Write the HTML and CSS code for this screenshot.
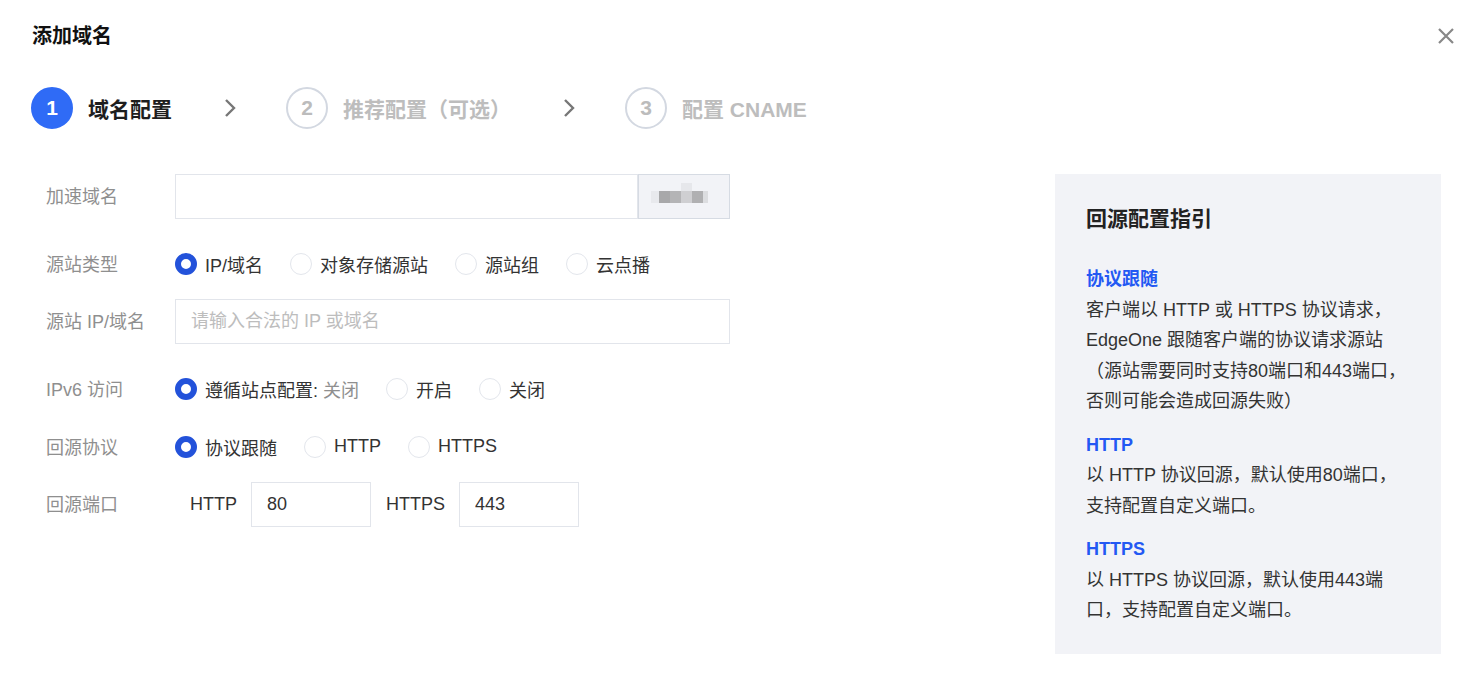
FILE: index.html
```html
<!DOCTYPE html>
<html lang="zh-CN">
<head>
    <meta charset="UTF-8">
    <title>添加域名</title>
    <link rel="stylesheet" href="styles.css">
</head>
<body>
    <div class="dialog">
        <div class="dialog-header">
            <h2 class="dialog-title">添加域名</h2>
            <button class="close-btn" aria-label="关闭">
                <svg width="18" height="18" viewBox="0 0 18 18"><path d="M2 2L16 16M16 2L2 16" stroke="#888" stroke-width="2.2" fill="none"/></svg>
            </button>
        </div>

        <div class="steps">
            <div class="step active"><span class="step-num">1</span><span class="step-text">域名配置</span></div>
            <svg class="step-arrow" width="12" height="20" viewBox="0 0 12 20"><path d="M2 2L10 10L2 18" stroke="#777" stroke-width="2.4" fill="none"/></svg>
            <div class="step"><span class="step-num">2</span><span class="step-text">推荐配置（可选）</span></div>
            <svg class="step-arrow" width="12" height="20" viewBox="0 0 12 20"><path d="M2 2L10 10L2 18" stroke="#777" stroke-width="2.4" fill="none"/></svg>
            <div class="step"><span class="step-num">3</span><span class="step-text">配置 CNAME</span></div>
        </div>

        <div class="content">
            <div class="form">
                <div class="form-row">
                    <label class="form-label label-input">加速域名</label>
                    <div class="input-group">
                        <input class="input input-domain" type="text">
                        <div class="addon">
                            <span class="blur b1"></span><span class="blur b2"></span><span class="blur b3"></span><span class="blur b4"></span><span class="blur b5"></span><span class="blur b6"></span>
                        </div>
                    </div>
                </div>
                <div class="form-row radio-row">
                    <label class="form-label">源站类型</label>
                    <div class="radios">
                        <span class="radio checked"><i></i>IP/域名</span>
                        <span class="radio"><i></i>对象存储源站</span>
                        <span class="radio"><i></i>源站组</span>
                        <span class="radio"><i></i>云点播</span>
                    </div>
                </div>
                <div class="form-row">
                    <label class="form-label label-input">源站 IP/域名</label>
                    <input class="input input-wide" type="text" placeholder="请输入合法的 IP 或域名">
                </div>
                <div class="form-row radio-row">
                    <label class="form-label">IPv6 访问</label>
                    <div class="radios">
                        <span class="radio checked"><i></i>遵循站点配置: <em>关闭</em></span>
                        <span class="radio"><i></i>开启</span>
                        <span class="radio"><i></i>关闭</span>
                    </div>
                </div>
                <div class="form-row radio-row">
                    <label class="form-label">回源协议</label>
                    <div class="radios">
                        <span class="radio checked"><i></i>协议跟随</span>
                        <span class="radio"><i></i>HTTP</span>
                        <span class="radio"><i></i>HTTPS</span>
                    </div>
                </div>
                <div class="form-row">
                    <label class="form-label label-input">回源端口</label>
                    <span class="port-label">HTTP</span>
                    <input class="input input-port" type="text" value="80">
                    <span class="port-label">HTTPS</span>
                    <input class="input input-port" type="text" value="443">
                </div>
            </div>

            <div class="guide">
                <h3>回源配置指引</h3>
                <div class="guide-item">
                    <div class="guide-title">协议跟随</div>
                    <p>客户端以 HTTP 或 HTTPS 协议请求，<br>EdgeOne 跟随客户端的协议请求源站<br>（源站需要同时支持80端口和443端口，<br>否则可能会造成回源失败）</p>
                </div>
                <div class="guide-item">
                    <div class="guide-title">HTTP</div>
                    <p>以 HTTP 协议回源，默认使用80端口，<br>支持配置自定义端口。</p>
                </div>
                <div class="guide-item">
                    <div class="guide-title">HTTPS</div>
                    <p>以 HTTPS 协议回源，默认使用443端<br>口，支持配置自定义端口。</p>
                </div>
            </div>
        </div>
    </div>
</body>
</html>
```

FILE: styles.css
```css
body {
    margin: 0;
    background: #fff;
    font-family: "Liberation Sans", "Noto Sans CJK SC", sans-serif;
    color: #333;
}
.dialog {
    padding: 24px 0 0 31px;
}
.dialog-header {
    display: flex;
    align-items: center;
    justify-content: space-between;
    padding-left: 1px;
    padding-right: 21px;
}
.dialog-title {
    margin: 0;
    font-size: 20px;
    line-height: 24px;
    font-weight: bold;
    color: #111;
}
.close-btn {
    border: none;
    background: none;
    padding: 0;
    width: 18px;
    height: 18px;
    cursor: pointer;
}
.steps {
    display: flex;
    align-items: center;
    margin-top: 39px;
    height: 42px;
}
.step {
    display: flex;
    align-items: center;
}
.step-num {
    width: 38px;
    height: 38px;
    border: 2px solid #d3d8e1;
    border-radius: 50%;
    display: flex;
    align-items: center;
    justify-content: center;
    font-size: 21px;
    font-weight: bold;
    color: #bcbcbc;
}
.step-text {
    margin-left: 15px;
    font-size: 21px;
    font-weight: bold;
    color: #bdbdbd;
}
.step.active .step-num {
    background: #2f6bf6;
    border-color: #2f6bf6;
    color: #fff;
}
.step.active .step-text {
    color: #1e1e1e;
}
.step-arrow {
    margin: 0 50px 0 52px;
}
.content {
    display: flex;
    justify-content: space-between;
    margin-top: 45px;
}
.form {
    padding-left: 15px;
}
.form-row {
    display: flex;
    align-items: center;
    margin-bottom: 22px;
}
.radio-row {
    padding-top: 9px;
    height: 27px;
}
.form-label {
    width: 129px;
    font-size: 18px;
    line-height: 22px;
    padding-top: 3px;
    color: #8f8f8f;
    flex-shrink: 0;
}
.form-label.label-input {
    padding-top: 0;
}
.input-group {
    display: flex;
}
.input {
    box-sizing: border-box;
    height: 45px;
    border: 1px solid #e2e5eb;
    padding: 0 15px;
    font-family: inherit;
    font-size: 18px;
    color: #333;
    outline: none;
}
.input::placeholder {
    color: #bdbdbd;
}
.input-domain {
    width: 463px;
}
.input-wide {
    width: 555px;
}
.input-port {
    width: 120px;
}
.addon {
    box-sizing: border-box;
    width: 92px;
    height: 45px;
    background: #f2f3f7;
    border: 1px solid #d6dbe3;
    display: flex;
    align-items: center;
    padding-left: 12px;
}
.blur {
    display: inline-block;
    width: 11px;
    height: 12px;
}
.b1 { background: #e8e9ed; width: 8px; }
.b2 { background: #a8a8aa; }
.b3 { background: #b4b4b6; }
.b4 { background: #cfcfd2; box-shadow: 0 -8px 0 #e6e7eb; }
.b5 { background: #b0b0b2; }
.b6 { background: #dcdde0; width: 5px; }
.radios {
    display: flex;
    align-items: center;
}
.radio {
    display: flex;
    align-items: center;
    margin-right: 27px;
    font-size: 18px;
    color: #333;
}
.radio i {
    box-sizing: border-box;
    width: 22px;
    height: 22px;
    border: 1px solid #e3e6ec;
    border-radius: 50%;
    margin-right: 8px;
}
.radio.checked i {
    border: 6px solid #2352da;
}
.radio em {
    font-style: normal;
    color: #8f8f8f;
    margin-left: 5px;
}
.port-label {
    font-size: 18px;
    color: #333;
    padding: 0 14px 0 15px;
}
.guide {
    box-sizing: border-box;
    width: 386px;
    height: 480px;
    margin-right: 35px;
    background: #f2f3f7;
    padding: 30px 10px 0 31px;
}
.guide h3 {
    margin: 0 0 30px;
    font-size: 21px;
    line-height: 30px;
    font-weight: bold;
    color: #222;
}
.guide-item {
    margin-bottom: 13px;
    font-size: 18px;
    line-height: 30.5px;
}
.guide-title {
    color: #2358f3;
    font-weight: bold;
}
.guide-item p {
    margin: 0;
    color: #333;
}
```
